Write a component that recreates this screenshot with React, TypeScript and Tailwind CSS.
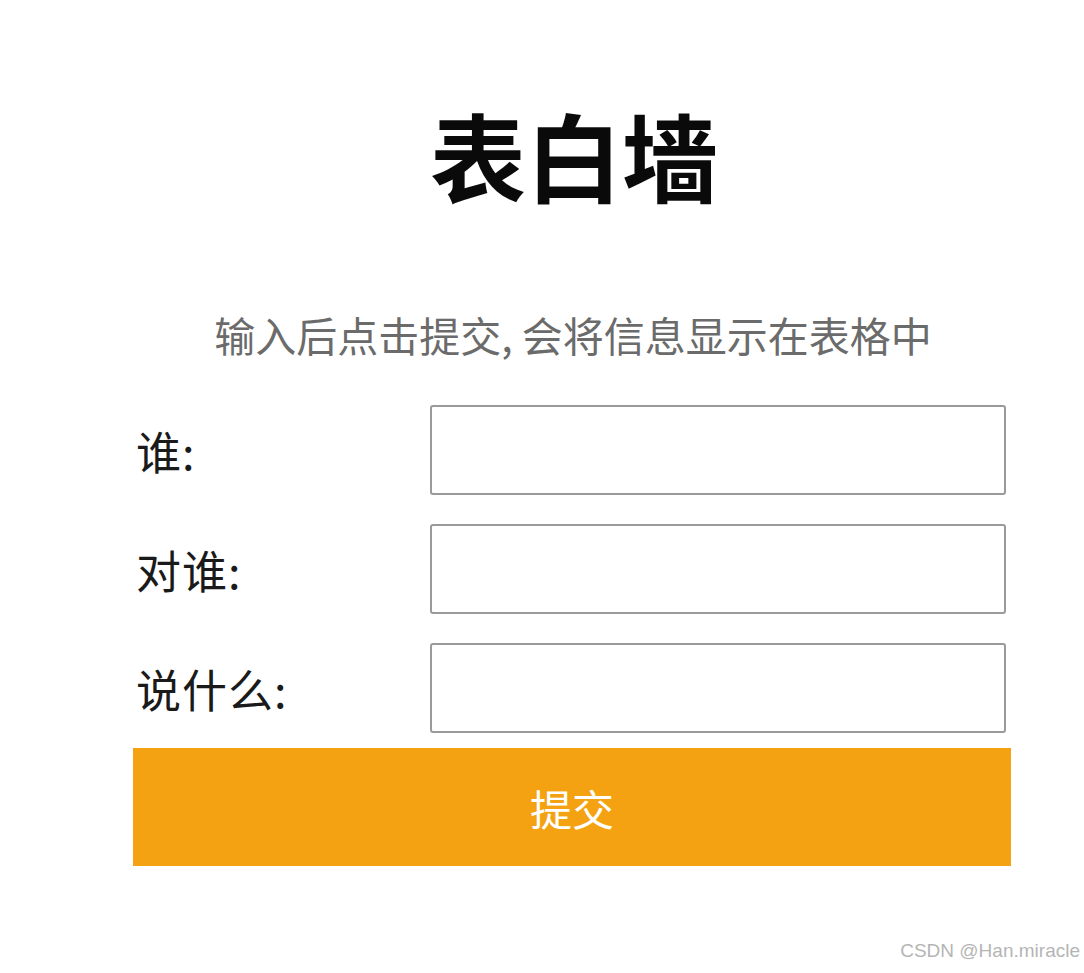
export default function App() {
  const rows = ['谁:', '对谁:', '说什么:'];

  return (
    <div
      className="relative min-h-[973px] w-full bg-white"
      style={{ fontFamily: '"Noto Sans CJK SC", "Noto Sans", sans-serif' }}
    >
      <div className="ml-[133px] w-[878px] pt-[98px]">
        <h1 className="pl-[4px] text-center text-[96px] leading-[112px] font-bold text-[#0a0a0a]">表白墙</h1>

        <p className="mt-[96px] pl-[2px] text-center text-[41px] leading-[56px] text-[#6b6b6b]">
          输入后点击提交, 会将信息显示在表格中
        </p>

        <div className="mt-[43px] flex flex-col gap-[29px]">
          {rows.map((label) => (
            <div key={label} className="flex items-center">
              <span className="w-[297px] pl-[3px] text-[45px] leading-none tracking-[1px] text-[#1a1a1a]">{label}</span>
              <input
                type="text"
                className="h-[90px] w-[576px] rounded-[3px] border-[2px] border-[#9a9a9a] bg-white"
              />
            </div>
          ))}
        </div>

        <button className="mt-[15px] flex h-[118px] w-full items-center justify-center bg-[#f5a212] text-[42px] text-white">
          提交
        </button>
      </div>

      <div
        className="absolute right-[4px] bottom-[8px] text-[19px] text-[#b5b5b5]"
        style={{ fontFamily: '"Liberation Sans", Arial, sans-serif' }}
      >
        CSDN @Han.miracle
      </div>
    </div>
  );
}
